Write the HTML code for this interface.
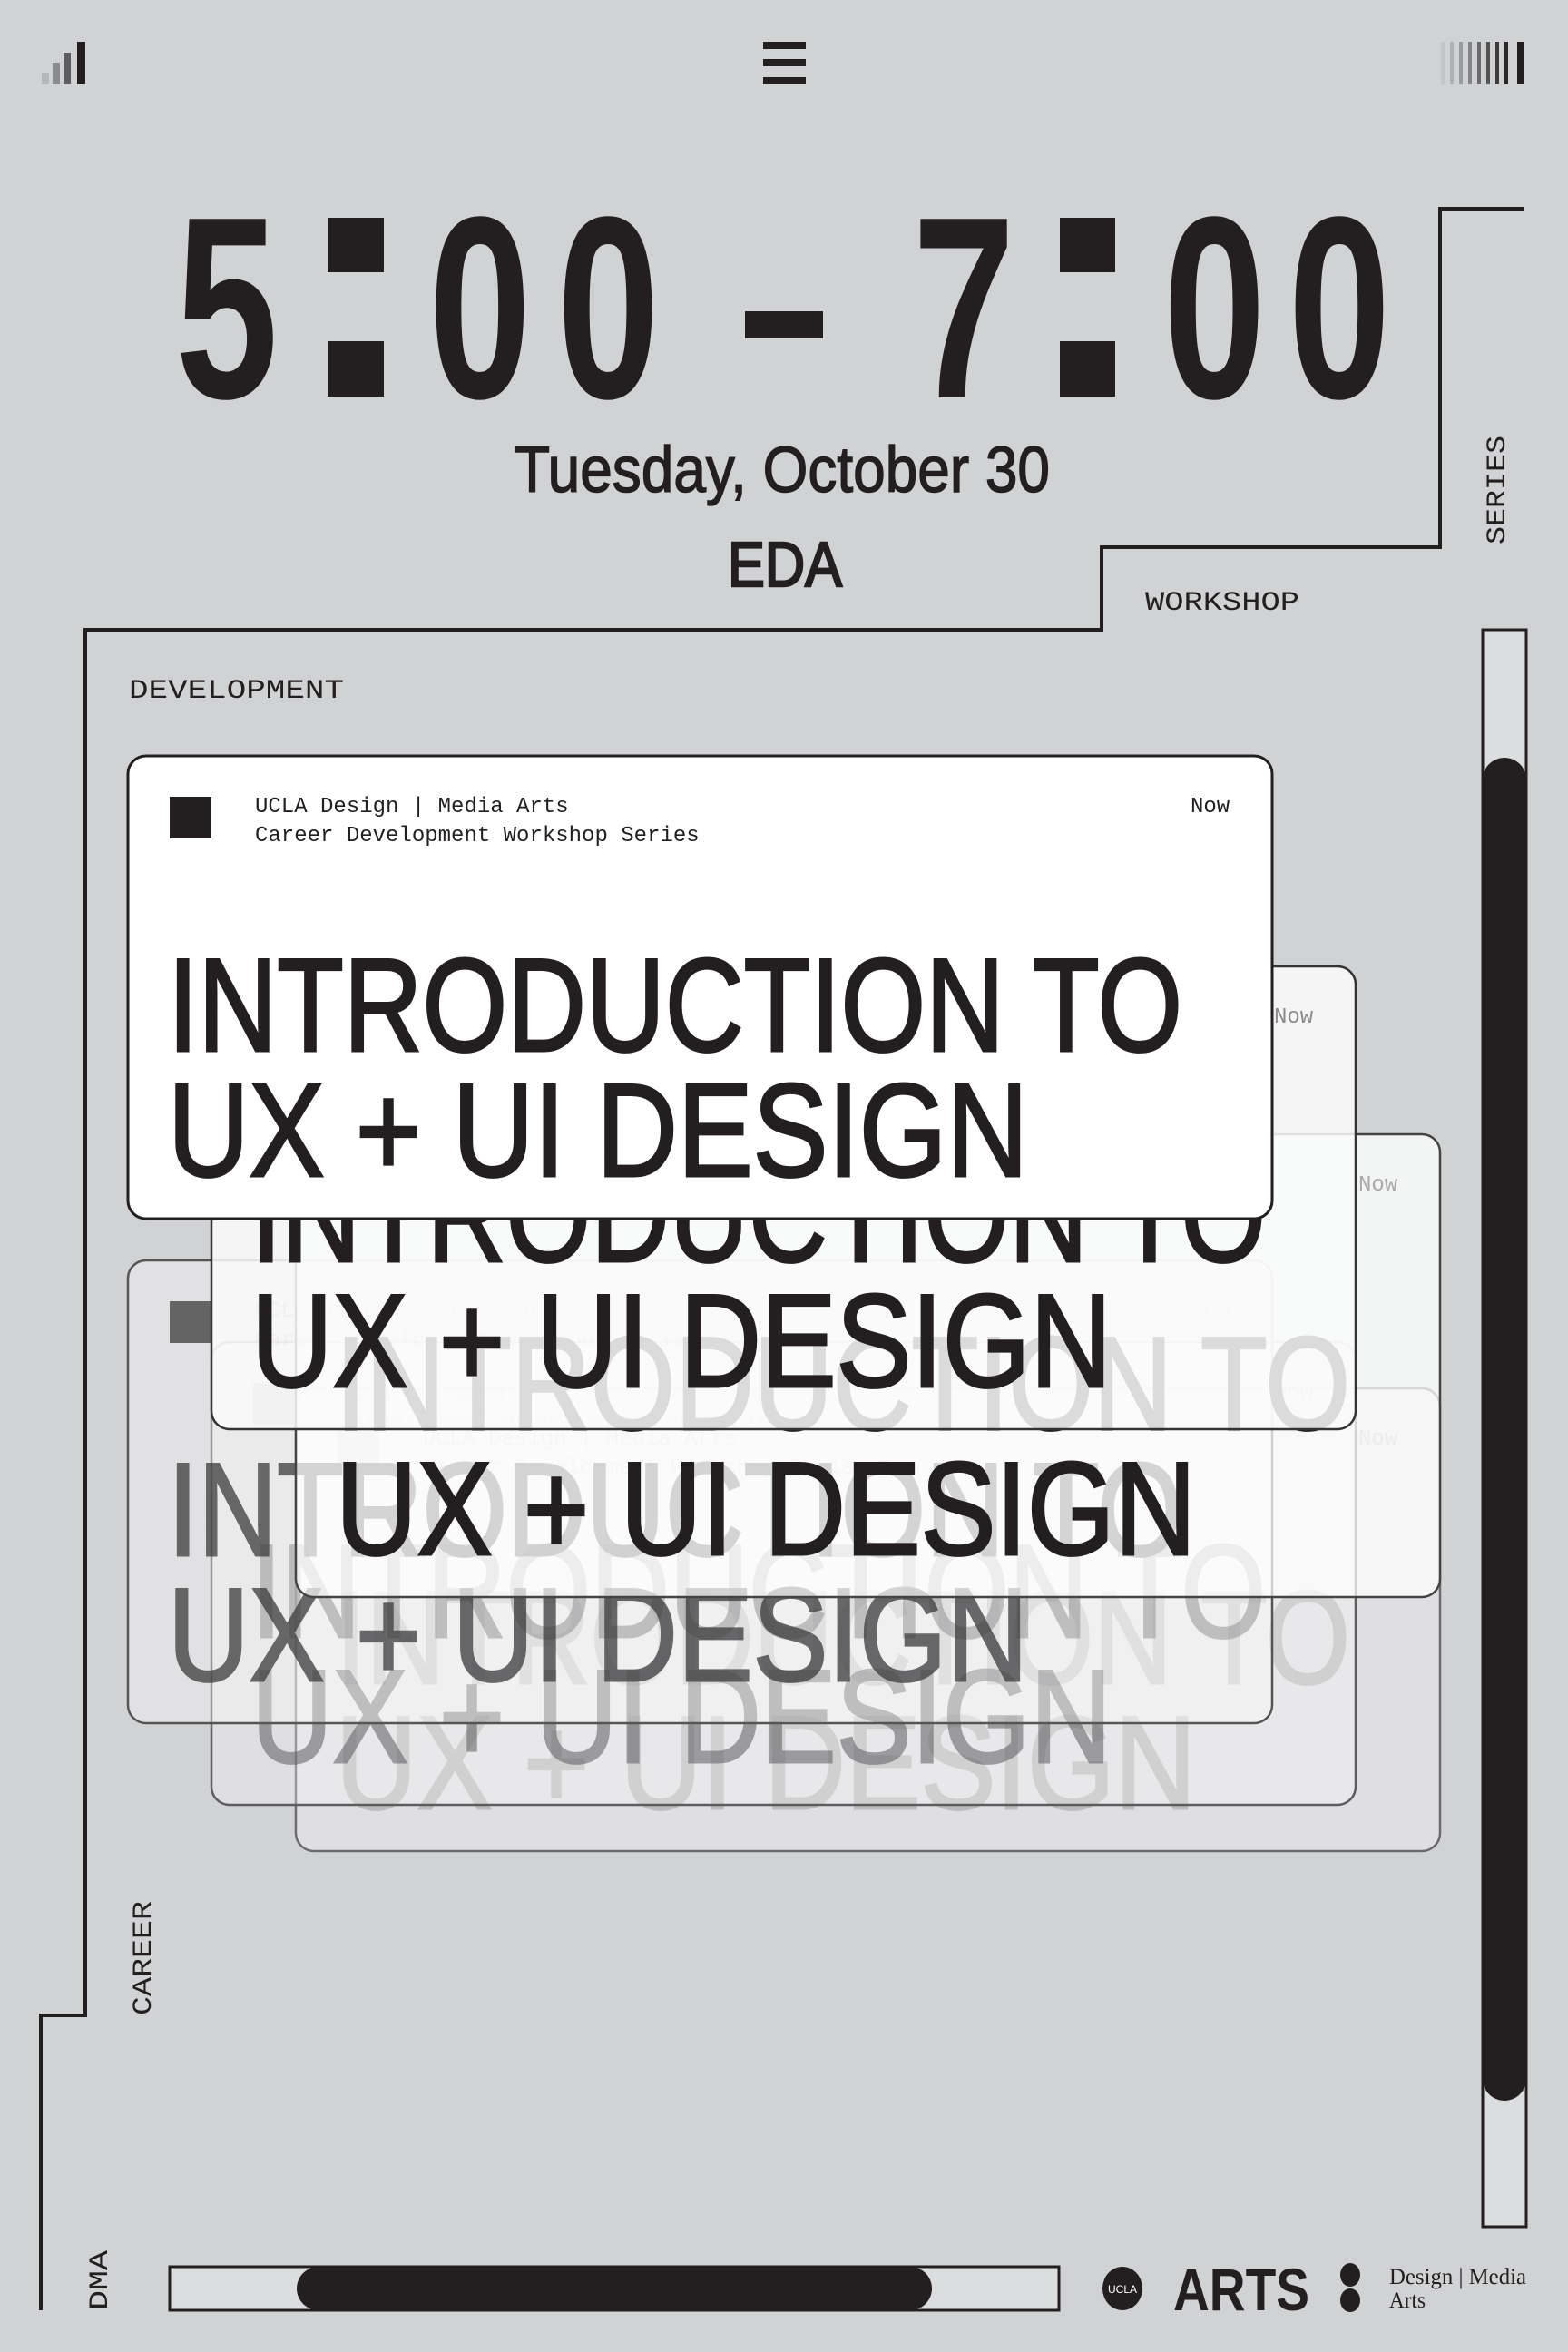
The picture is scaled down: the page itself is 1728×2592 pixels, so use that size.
<!DOCTYPE html>
<html><head><meta charset="utf-8"><style>
html,body{margin:0;padding:0;background:#d1d2d4;}
svg{display:block;}
</style></head><body>
<svg width="1728" height="2592" viewBox="0 0 1728 2592" xmlns="http://www.w3.org/2000/svg">
<rect width="1728" height="2592" fill="#d1d2d4"/>
<!-- top icons -->
<g fill="#231f20">
<rect x="46" y="80" width="8" height="13" fill="#b5b6b8"/>
<rect x="58" y="69" width="8" height="24" fill="#8a8b8d"/>
<rect x="70" y="58" width="8" height="35" fill="#5d5d5f"/>
<rect x="85" y="46" width="9" height="47"/>
<rect x="841" y="46" width="47" height="8"/>
<rect x="841" y="65" width="47" height="8"/>
<rect x="841" y="85" width="47" height="8"/>
<rect x="1588" y="46" width="4" height="47" fill="#c4c5c7"/>
<rect x="1598" y="46" width="4" height="47" fill="#b0b1b3"/>
<rect x="1608" y="46" width="4" height="47" fill="#9a9b9d"/>
<rect x="1618" y="46" width="4" height="47" fill="#838486"/>
<rect x="1628" y="46" width="4" height="47" fill="#6a6a6c"/>
<rect x="1638" y="46" width="4" height="47" fill="#535354"/>
<rect x="1648" y="46" width="4" height="47" fill="#3d3b3c"/>
<rect x="1658" y="46" width="4" height="47" fill="#2b2829"/>
<rect x="1672" y="46" width="8" height="47"/>
</g>
<!-- time -->
<g fill="#231f20" font-family="Liberation Sans, sans-serif" font-weight="bold" font-size="286" text-anchor="middle">
<g transform="scale(0.71,1)">
<text x="352" y="438">5</text>
<text x="745" y="438">0</text>
<text x="944" y="438">0</text>
<text x="1496" y="438">7</text>
<text x="1885" y="438">0</text>
<text x="2079" y="438">0</text>
</g>
<rect x="361" y="240" width="62" height="60"/>
<rect x="361" y="376" width="62" height="61"/>
<rect x="821" y="343" width="86" height="30"/>
<rect x="1168" y="240" width="61" height="60"/>
<rect x="1168" y="376" width="61" height="61"/>
</g>
<g fill="#231f20" stroke="#231f20" stroke-width="1.5" font-family="Liberation Sans, sans-serif">
<text x="567" y="542" font-size="71" textLength="590" lengthAdjust="spacingAndGlyphs">Tuesday, October 30</text>
<text x="802" y="646" font-size="70" textLength="126" lengthAdjust="spacingAndGlyphs" stroke-width="2.5">EDA</text>
</g>
<!-- frame lines -->
<polyline points="1680,230 1587,230 1587,603 1214,603 1214,694 94,694 94,2221 45,2221 45,2546" fill="none" stroke="#231f20" stroke-width="4"/>
<!-- labels -->
<g fill="#231f20" font-family="Liberation Mono, monospace" font-size="30">
<text x="1262" y="672" textLength="170" lengthAdjust="spacingAndGlyphs">WORKSHOP</text>
<text x="142" y="769" textLength="237" lengthAdjust="spacingAndGlyphs">DEVELOPMENT</text>
<text transform="translate(1658,600) rotate(-90)" textLength="120" lengthAdjust="spacingAndGlyphs">SERIES</text>
<text transform="translate(166,2221) rotate(-90)" textLength="126" lengthAdjust="spacingAndGlyphs">CAREER</text>
<text transform="translate(118,2546) rotate(-90)" textLength="66" lengthAdjust="spacingAndGlyphs">DMA</text>
</g>
<!-- scrollbars -->
<rect x="1634" y="694" width="48" height="1760" fill="#dcdddf" stroke="#231f20" stroke-width="3"/>
<rect x="1634" y="835" width="48" height="1480" rx="24" fill="#231f20"/>
<rect x="187" y="2498" width="980" height="48" fill="#dcdddf" stroke="#231f20" stroke-width="3"/>
<rect x="327" y="2498" width="700" height="48" rx="24" fill="#231f20"/>
<!-- logo -->
<ellipse cx="1237" cy="2522" rx="22" ry="24" fill="#231f20"/>
<text x="1237" y="2527" font-family="Liberation Sans, sans-serif" font-size="12" fill="#fff" text-anchor="middle">UCLA</text>
<text x="1293" y="2546" font-family="Liberation Sans, sans-serif" font-weight="bold" font-size="66" fill="#231f20" textLength="150" lengthAdjust="spacingAndGlyphs">ARTS</text>
<ellipse cx="1488" cy="2507" rx="11" ry="13" fill="#231f20"/>
<ellipse cx="1488" cy="2535" rx="11" ry="13" fill="#231f20"/>
<g font-family="Liberation Serif, serif" font-size="25" fill="#231f20">
<text x="1531" y="2517" textLength="151" lengthAdjust="spacingAndGlyphs">Design | Media</text>
<text x="1531" y="2543" textLength="40" lengthAdjust="spacingAndGlyphs">Arts</text>
</g>

<!-- cards back to front -->
<g transform="translate(185,697)">
<rect x="141" y="833" width="1261" height="510" rx="20" fill="#fff" fill-opacity="0.3" stroke="#6b6b6d" stroke-width="2.5"/>
<g opacity="0.4" fill="#8a8a8c" stroke="#8a8a8c">
<rect x="187" y="878" width="46" height="46" stroke="none"/>
<g font-family="Liberation Mono, monospace" font-size="24" stroke="none"><text x="281" y="895">UCLA Design | Media Arts</text><text x="281" y="927">Career Development Workshop Series</text><text x="1312" y="895">Now</text></g>
<g font-family="Liberation Sans, sans-serif" font-size="146" stroke-width="3"><text x="185" y="1158" textLength="1118" lengthAdjust="spacingAndGlyphs">INTRODUCTION TO</text><text x="185" y="1296" textLength="948" lengthAdjust="spacingAndGlyphs">UX + UI DESIGN</text></g>
</g></g>

<g transform="translate(92,646)">
<rect x="141" y="833" width="1261" height="510" rx="20" fill="#fff" fill-opacity="0.3" stroke="#5d5d5f" stroke-width="2.5"/>
<g opacity="0.55" fill="#5d5d5f" stroke="#5d5d5f">
<rect x="187" y="878" width="46" height="46" stroke="none"/>
<g font-family="Liberation Mono, monospace" font-size="24" stroke="none"><text x="281" y="895">UCLA Design | Media Arts</text><text x="281" y="927">Career Development Workshop Series</text><text x="1312" y="895">Now</text></g>
<g font-family="Liberation Sans, sans-serif" font-size="146" stroke-width="3"><text x="185" y="1158" textLength="1118" lengthAdjust="spacingAndGlyphs">INTRODUCTION TO</text><text x="185" y="1296" textLength="948" lengthAdjust="spacingAndGlyphs">UX + UI DESIGN</text></g>
</g></g>

<g transform="translate(0,556)">
<rect x="141" y="833" width="1261" height="510" rx="20" fill="#fff" fill-opacity="0.35" stroke="#555" stroke-width="2.5"/>
<g opacity="0.75" fill="#3a3a3b" stroke="#3a3a3b">
<rect x="187" y="878" width="46" height="46" stroke="none"/>
<g font-family="Liberation Mono, monospace" font-size="24" stroke="none" opacity="0.4"><text x="281" y="895">UCLA Design | Media Arts</text><text x="281" y="927">Career Development Workshop Series</text><text x="1312" y="895">Now</text></g>
<g font-family="Liberation Sans, sans-serif" font-size="146" stroke-width="3"><text x="185" y="1158" textLength="1118" lengthAdjust="spacingAndGlyphs">INTRODUCTION TO</text><text x="185" y="1296" textLength="948" lengthAdjust="spacingAndGlyphs">UX + UI DESIGN</text></g>
</g></g>

<g transform="translate(185,417)">
<rect x="141" y="833" width="1261" height="510" rx="20" fill="#fff" fill-opacity="0.72" stroke="#444" stroke-width="2.5"/>
<g fill="#231f20" stroke="#231f20">
<g font-family="Liberation Mono, monospace" font-size="24" stroke="none" opacity="0.35"><text x="281" y="895">UCLA Design | Media Arts</text><text x="281" y="927">Career Development Workshop Series</text><text x="1312" y="895">Now</text></g>
<g font-family="Liberation Sans, sans-serif" font-size="146" stroke-width="3"><text x="185" y="1158" textLength="1118" lengthAdjust="spacingAndGlyphs">INTRODUCTION TO</text><text x="185" y="1296" textLength="948" lengthAdjust="spacingAndGlyphs">UX + UI DESIGN</text></g>
</g></g>

<g transform="translate(92,232)">
<rect x="141" y="833" width="1261" height="510" rx="20" fill="#fafafa" fill-opacity="0.86" stroke="#333" stroke-width="2.5"/>
<g fill="#231f20" stroke="#231f20">
<g font-family="Liberation Mono, monospace" font-size="24" stroke="none" opacity="0.5"><text x="281" y="895">UCLA Design | Media Arts</text><text x="281" y="927">Career Development Workshop Series</text><text x="1312" y="895">Now</text></g>
<g font-family="Liberation Sans, sans-serif" font-size="146" stroke-width="3"><text x="185" y="1158" textLength="1118" lengthAdjust="spacingAndGlyphs">INTRODUCTION TO</text><text x="185" y="1296" textLength="948" lengthAdjust="spacingAndGlyphs">UX + UI DESIGN</text></g>
</g></g>

<g>
<rect x="141" y="833" width="1261" height="510" rx="20" fill="#fff" stroke="#231f20" stroke-width="3"/>
<g fill="#231f20" stroke="#231f20">
<rect x="187" y="878" width="46" height="46" stroke="none"/>
<g font-family="Liberation Mono, monospace" font-size="24" stroke="none"><text x="281" y="895">UCLA Design | Media Arts</text><text x="281" y="927">Career Development Workshop Series</text><text x="1312" y="895">Now</text></g>
<g font-family="Liberation Sans, sans-serif" font-size="146" stroke-width="3"><text x="185" y="1158" textLength="1118" lengthAdjust="spacingAndGlyphs">INTRODUCTION TO</text><text x="185" y="1296" textLength="948" lengthAdjust="spacingAndGlyphs">UX + UI DESIGN</text></g>
</g></g>
</svg>
</body></html>
